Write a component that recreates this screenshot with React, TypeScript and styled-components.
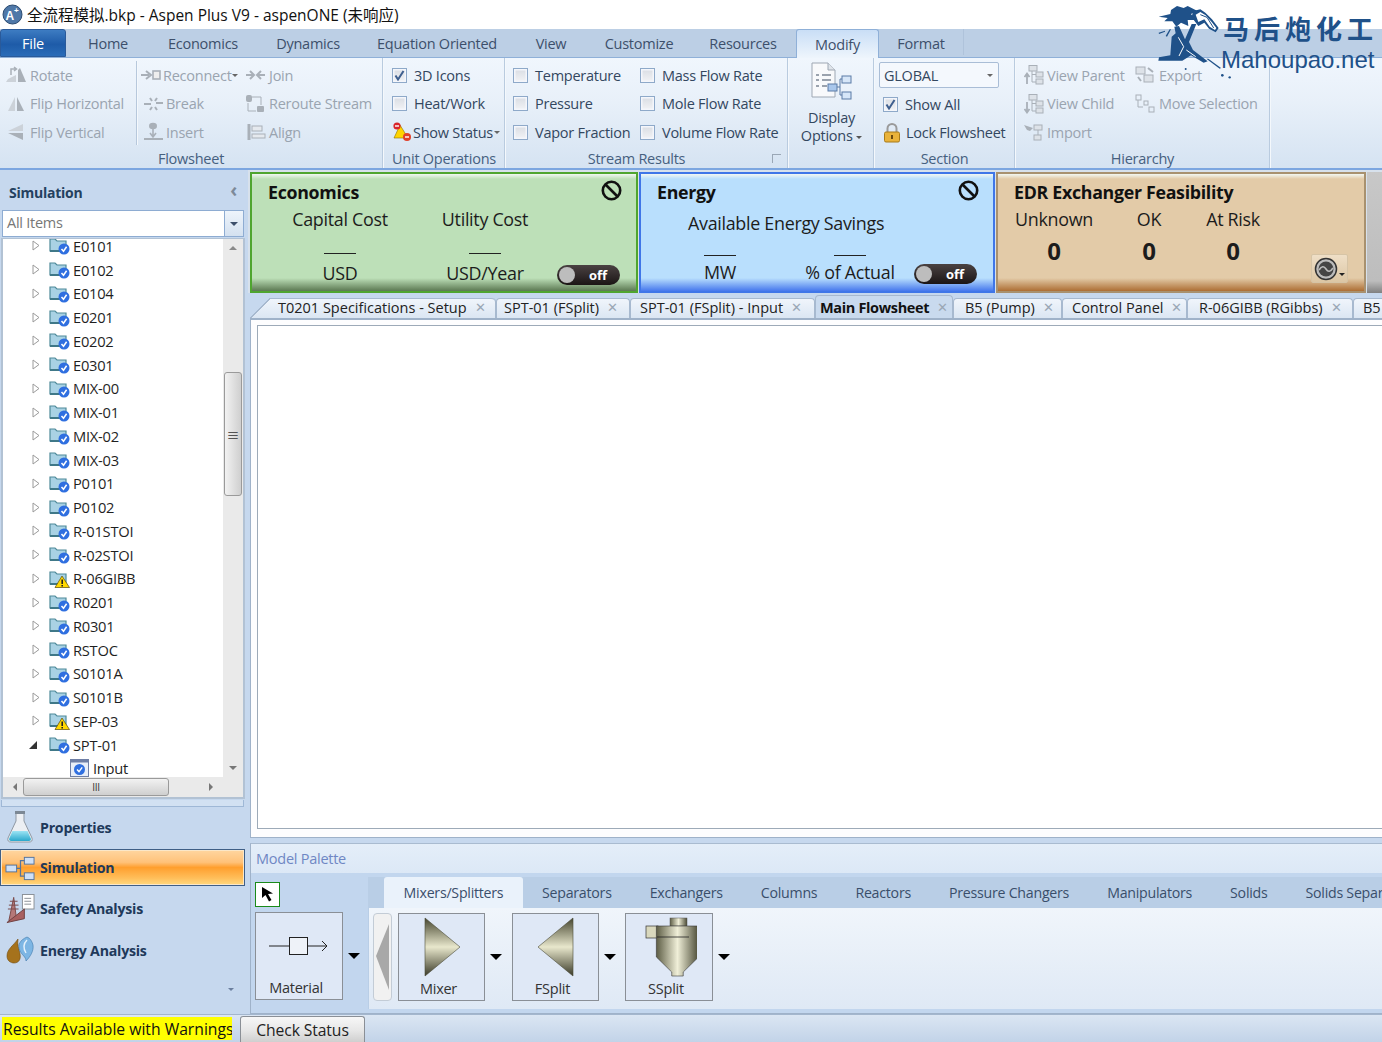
import React from "react";
import styled, { createGlobalStyle } from "styled-components";

const FONT = `"Open Sans", "Noto Sans CJK SC", sans-serif`;

const Global = createGlobalStyle`
  html, body { margin: 0; padding: 0; background: #fff; overflow: hidden; }
  * { box-sizing: border-box; }
`;

const Page = styled.div`
  width: 1382px; height: 1042px; overflow: hidden; position: relative;
  display: flex; flex-direction: column; background: #c6d8ee;
  font-family: ${FONT}; font-size: 14.5px; letter-spacing: -0.25px; color: #222;
`;
const TitleBar = styled.div`
  height: 29px; background: #fff; display: flex; align-items: center; gap: 4px; padding: 0 0 0 2px;
  font-size: 15.5px; color: #111; flex: none; letter-spacing: 0;
`;
const TabBar = styled.div`
  height: 29px; flex: none; display: flex; align-items: stretch;
  background: #bccfe5; border-bottom: 1px solid #8fb0d8;
`;
const FileTab = styled.div`
  width: 66px; background: linear-gradient(#3d7cc2, #1e5ba8 55%, #2a6cb8);
  color: #fff; border-radius: 3px 3px 0 0; display: flex; align-items: center; justify-content: center;
  border: 1px solid #2a5a9a;
`;
const RibbonTab = styled.div<{ $w: number; $active?: boolean }>`
  width: ${p => p.$w}px; display: flex; align-items: center; justify-content: center; color: #3d4f6b;
  ${p => p.$active ? `background: linear-gradient(#c9def6, #eef5fc); border: 1px solid #8fb0d8; border-bottom: none; border-radius: 3px 3px 0 0; margin-bottom: -1px; position: relative;` : ""}
`;
const TabDivider = styled.div`width: 1px; background: #afc3db; margin-bottom: 2px;`;
const Ribbon = styled.div`
  height: 112px; flex: none; display: flex; background: linear-gradient(#f0f6fd, #e8f0f9 40%, #d5e3f2);
  border-bottom: 2px solid #7ca6e0;
`;
const Group = styled.div<{ $w: number }>`
  width: ${p => p.$w}px; flex: none; display: flex; flex-direction: column; position: relative;
  border-right: 1px solid #b9cbdf; box-shadow: 1px 0 0 #f4f8fc; margin-right: 1px;
`;
const GroupBody = styled.div<{ $pad?: number }>`
  flex: 1; display: flex; padding: 3px 0 0 ${p => p.$pad ?? 0}px; min-height: 0;
`;
const GroupLabel = styled.div<{ $offset?: number }>`
  height: 21px; text-align: center; color: #46607f; line-height: 23px; flex: none; padding-right: ${p => p.$offset ?? 0}px;
`;
const Col = styled.div<{ $w: number; $rule?: boolean; $inset?: number }>`
  width: ${p => p.$w}px; flex: none; display: flex; flex-direction: column; padding-left: ${p => p.$inset ?? 0}px;
  ${p => p.$rule ? `border-right: 1px solid #b7c8dc; height: 84px; box-shadow: 1px 0 0 #f4f8fc;` : ""}
`;
const Item = styled.div<{ $off?: boolean; $gap?: number }>`
  height: 28.6px; display: flex; align-items: center; gap: ${p => p.$gap ?? 3}px; white-space: nowrap;
  color: ${p => p.$off ? "#9aa4b0" : "#33475f"}; flex: none;
`;
const Nudge = styled.span<{ $w: number }>`margin-left: ${p => p.$w}px; flex: none;`;
const Box = styled.span`
  width: 15px; height: 15px; flex: none; border: 1px solid #8ea9c9; background: linear-gradient(#d9dde3, #f2f3f6);
  box-shadow: inset 0 0 0 1.5px #f4f6fb; display: flex; align-items: center; justify-content: center;
`;
const DownCaret = styled.span`
  width: 0; height: 0; border-left: 3px solid transparent; border-right: 3px solid transparent;
  border-top: 3px solid #666; flex: none;
`;
const DisplayBtn = styled.div`
  width: 85px; display: flex; flex-direction: column; align-items: center; color: #33475f; line-height: 18px; text-align: center;
  padding-top: 4px;
`;
const DisplayText = styled.div`margin-top: 7px; display: flex; flex-direction: column; align-items: center;`;
const SmallCombo = styled.div`
  width: 120px; height: 26px; margin: 1px 0 2px -4px; border: 1px solid #a9bdd6; background: #f4f8fd; border-radius: 2px; display: flex; align-items: center;
  justify-content: space-between; padding: 0 5px 0 4px; color: #33475f; flex: none;
`;
const Launcher = styled.div`position: absolute; right: 6px; bottom: 5px; width: 9px; height: 9px; border: 1px solid #9aa7b6; border-width: 1px 0 0 1px;`;
const Logo = styled.div`
  position: absolute; left: 1157px; top: 5px; width: 225px; height: 76px; pointer-events: none; display: flex; z-index: 5;
`;
const LogoText = styled.div`display: flex; flex-direction: column; margin-left: -9px; color: #1f5189;`;
const LogoCn = styled.div`font-size: 26px; font-weight: 700; line-height: 36px; letter-spacing: 5px; margin-top: 5px; font-family: "Noto Sans CJK SC", sans-serif;`;
const LogoEn = styled.div`font-size: 24px; line-height: 28px; letter-spacing: 0; margin-left: -2px; font-family: "Liberation Sans", sans-serif; white-space: nowrap;`;

const Body = styled.div`flex: 1; display: flex; min-height: 0;`;
const Sidebar = styled.div`width: 248px; flex: none; display: flex; flex-direction: column; background: #c6d8ee; padding-right: 2px;`;
const SideHead = styled.div`
  height: 40px; flex: none; display: flex; align-items: center; justify-content: space-between; padding: 5px 9px 0 9px;
  font-weight: 700; color: #24415f; font-size: 14px;
`;
const Chevron = styled.span`color: #7d8a99; font-size: 19px; font-weight: 700; margin-top: -6px;`;
const Combo = styled.div`
  height: 27px; flex: none; margin: 0 2px; display: flex; border: 1px solid #8eacd2; background: #fff;
`;
const ComboText = styled.div`flex: 1; color: #777; padding-left: 4px; line-height: 24px;`;
const ComboBtn = styled.div`
  width: 19px; background: linear-gradient(#eef4fb, #d4e1f0); border-left: 1px solid #8eacd2; display: flex; align-items: center; justify-content: center;
`;
const Caret = styled.span<{ $c?: string; $s?: number }>`
  width: 0; height: 0; border-left: ${p => p.$s ?? 4}px solid transparent; border-right: ${p => p.$s ?? 4}px solid transparent;
  border-top: ${p => p.$s ?? 4}px solid ${p => p.$c ?? "#3d4f6b"}; flex: none;
`;
const TreeWrap = styled.div`
  height: 561px; flex: none; margin: 1px 1px 0; border: 2px solid #b2c2d4; border-top-width: 1px; background: #fff; display: grid;
  grid-template-columns: 1fr 20px; grid-template-rows: 1fr 20px; overflow: hidden;
`;
const TreeClip = styled.div`overflow: hidden;`;
const TreeList = styled.div`margin-top: -5px;`;
const Row = styled.div`
  height: 23.76px; display: flex; align-items: center; color: #1f1f1f; font-size: 14.7px; padding-left: 25px; white-space: nowrap;
`;
const SubRow = styled(Row)`padding-left: 67px; gap: 4px;`;
const Expander = styled.span`width: 21px; flex: none; display: flex;`;
const RowLabel = styled.span`margin-left: 3px;`;
const VScroll = styled.div`
  background: #eaeaea; display: flex; flex-direction: column; align-items: center; position: relative; justify-content: space-between;
`;
const Thumb = styled.div`
  position: absolute; left: 1px; top: 133px; width: 18px; height: 124px; border: 1px solid #9a9a9a; border-radius: 3px;
  background: linear-gradient(90deg, #f2f2f2, #cfcfcf); display: flex; align-items: center; justify-content: center;
  color: #333; font-size: 13px;
`;
const HScroll = styled.div`
  background: #eaeaea; position: relative; display: flex; align-items: center; justify-content: space-between; padding: 0 8px;
`;
const HThumb = styled.div`
  position: absolute; left: 20px; top: 1px; width: 146px; height: 18px; border: 1px solid #9a9a9a; border-radius: 3px;
  background: linear-gradient(#f2f2f2, #cfcfcf); display: flex; align-items: center; justify-content: center; color: #333; font-size: 10px;
`;
const Corner = styled.div`background: #eaeaea;`;
const Gripper = styled.div`height: 7px; flex: none; margin: 1px 2px 0 1px; background: #d2e1f2; border: 1px solid #9fb8d6; border-top: none;`;
const NavItem = styled.div<{ $active?: boolean; $h: number; $lift?: number }>`
  height: ${p => p.$h}px; flex: none; display: flex; align-items: center; font-weight: 700; color: #20395a; font-size: 14.2px; margin: 0 1px 0 0;
  padding: 0 0 ${p => p.$lift ?? 0}px 5px; gap: 5px;
  ${p => p.$active ? `background: linear-gradient(#ffd6a0, #ffc27a 35%, #ff9f2e 50%, #ffbe5a 80%, #ffd97f); border: 1px solid #3f5f86; box-shadow: inset 0 0 0 1px #fbe7c8; padding-left: 4px;` : ""}
`;
const NavIcon = styled.span`width: 30px; height: 34px; flex: none; display: flex; align-items: center; justify-content: center;`;
const NavMore = styled.div`flex: 1; display: flex; justify-content: flex-end; align-items: flex-start; padding: 19px 12px 0 0;`;

const Main = styled.div`flex: 1; min-width: 0; display: flex; flex-direction: column; background: #c6d8ee;`;
const Cards = styled.div`height: 123px; flex: none; display: flex; padding: 2px 0 0 2px; gap: 1px; background: #d7e1ec;`;
const Card = styled.div<{ $w: number; $bg: string; $bd: string; $end: string }>`
  width: ${p => p.$w}px; flex: none; height: 121px; border: 2px solid ${p => p.$bd}; padding: 5px 16px 0 16px;
  background: linear-gradient(#f2f7f2 0, ${p => p.$bg} 5px, ${p => p.$bg} 104px, ${p => p.$end} 118px); position: relative;
  display: flex; flex-direction: column; color: #1c1c1c;
`;
const CardHead = styled.div`display: flex; justify-content: space-between; align-items: center; height: 26px; flex: none;`;
const CardTitle = styled.div`font-weight: 700; font-size: 17.8px; letter-spacing: -0.3px; color: #111;`;
const CardGrid = styled.div<{ $cols: string }>`
  display: grid; grid-template-columns: ${p => p.$cols}; justify-items: center; align-items: center; align-content: start;
`;
const CardLabel = styled.div<{ $span?: number; $mt?: number; $indent?: number }>`
  font-size: 17.9px; letter-spacing: -0.3px; white-space: nowrap; height: 28px; line-height: 28px; margin-top: ${p => p.$mt ?? 0}px;
  ${p => p.$span ? `grid-column: span ${p.$span}; justify-self: start; margin-left: ${p.$indent ?? 0}px;` : ""}
`;
const Dash = styled.div<{ $mt: number; $first?: boolean }>`
  width: 32px; height: 1px; background: #222; margin-top: ${p => p.$mt}px;
  ${p => p.$first ? "grid-column: 1;" : ""}
`;
const Unit = styled.div<{ $mt?: number }>`font-size: 17.9px; letter-spacing: -0.3px; line-height: 24px; margin-top: ${p => p.$mt ?? 7}px; white-space: nowrap;`;
const Toggle = styled.div`
  width: 63px; height: 20px; background: linear-gradient(#4a4242, #1b1515); border-radius: 10px; display: flex; align-items: center; justify-content: space-between;
  padding: 0 13px 0 2px; color: #fff; font-weight: 700; font-size: 13px; letter-spacing: 0; align-self: end; justify-self: end;
`;
const Knob = styled.span`width: 16px; height: 16px; border-radius: 50%; background: #bdbdbd; flex: none;`;
const Count = styled.div`font-weight: 700; font-size: 24px; line-height: 36px;`;
const GearBtn = styled.div`
  position: absolute; right: 16px; bottom: 8px; width: 37px; height: 29px; background: linear-gradient(#efdfc7, #dcc6a4); border: 1px solid #d6c4a6; border-radius: 2px;
  display: flex; align-items: center; justify-content: center; gap: 1px;
`;
const CardRest = styled.div`flex: 1; background: linear-gradient(#c8c8c8, #bdbdbd 90%, #808080); height: 121px;`;

const DocTabs = styled.div`height: 23px; flex: none; display: flex; align-items: flex-end; background: #c6d8ee; padding-left: 2px; overflow: hidden; margin-top: 2px;`;
const DocTab = styled.div<{ $w: number; $active?: boolean; $pad: number; $slant?: number }>`
  width: ${p => p.$w}px; flex: none; height: ${p => p.$active ? 23 : 20}px; display: flex; align-items: center; gap: 8px; padding: ${p => p.$active ? "0" : "0 0 2px"};
  padding-left: ${p => p.$pad}px; white-space: nowrap; font-size: 14.5px; letter-spacing: 0; color: #222; position: relative; isolation: isolate;
  border: 1px solid #a7b9cf; border-bottom: none; border-radius: 4px 4px 0 0;
  background: ${p => p.$active ? "#c9daee" : "linear-gradient(#f0f5fb, #dbe6f3)"};
  ${p => p.$active ? "font-weight: 700; color: #111; letter-spacing: -0.35px;" : ""}
  ${p => p.$slant ? `
    border-left: none; border-top: none; border-radius: 0 4px 0 0; background: none;
    &::before {
      content: ""; position: absolute; inset: 0; z-index: -1; border-top: 1px solid #a7b9cf; border-radius: 0 4px 0 0;
      background: linear-gradient(#f0f5fb, #dbe6f3);
      clip-path: polygon(0 100%, ${p.$slant}px 0, 100% 0, 100% 100%);
    }
    &::after {
      content: ""; position: absolute; left: 0; bottom: 0; width: ${p.$slant}px; height: 100%; z-index: 0;
      background: linear-gradient(to top left, transparent calc(50% - 1px), #a7b9cf calc(50% - 1px), #a7b9cf 50%, transparent 50%);
    }
  ` : ""}
`;
const DocClose = styled.span`color: #9aa7b5; font-size: 13px; font-weight: 400; line-height: 1;`;
const CanvasOuter = styled.div`
  height: 520px; flex: none; margin-left: 2px; background: #fdfdfe; border: 1px solid #9fb2c9; border-right: none; padding: 5px 0 8px 6px;
  border-top: 2px solid #9fb2c9;
`;
const Canvas = styled.div`height: 100%; background: #fff; border: 1px solid #9daab8; border-right: none;`;
const PalHead = styled.div`
  height: 30px; flex: none; margin: 5px 0 0 2px; padding-left: 5px; line-height: 30px; color: #6f87c4; background: linear-gradient(#e4eef9, #dce8f6);
  border-left: 1px solid #9fb2c9; border-top: 1px solid #a9bbd0;
`;
const Palette = styled.div`
  flex: 1; margin-left: 2px; background: #c2d6ee; display: flex; padding: 0 0 4px 4px; border-left: 1px solid #9fb2c9; border-bottom: 1px solid #9fb2c9; min-height: 0;
`;
const PalLeft = styled.div`width: 113px; flex: none; display: flex; flex-direction: column; padding-top: 9px;`;
const Arrow = styled.div`
  width: 25px; height: 25px; background: #fff; border: 1px solid #1a8a1a; display: flex; align-items: center; justify-content: center;
`;
const MatRow = styled.div`display: flex; align-items: center; gap: 5px; margin-top: 5px;`;
const Model = styled.div<{ $w?: number }>`
  width: ${p => p.$w ?? 87}px; height: 88px; flex: none; background: #dfe8f6; border: 1px solid #8a8f96; display: flex; flex-direction: column; align-items: center;
  justify-content: space-between; color: #333; padding: 3px 0 1px; line-height: 20px; font-size: 14.5px;
`;
const ModelLabel = styled.span`margin-right: 6px;`;
const MaterialSlot = styled.span`height: 40px; display: flex; align-items: flex-end; margin-left: -2px;`;
const Black = styled.span`
  width: 0; height: 0; border-left: 6px solid transparent; border-right: 6px solid transparent; border-top: 6px solid #000; flex: none;
`;
const PalRight = styled.div`flex: 1; display: flex; flex-direction: column; padding-top: 4px; min-width: 0;`;
const PalTabs = styled.div`height: 31px; flex: none; display: flex; background: #b9cee6; padding-left: 16px; white-space: nowrap; overflow: hidden;`;
const PalTab = styled.div<{ $active?: boolean }>`
  flex: none; padding: 0 19px; display: flex; align-items: center; color: #3a4e6b; font-size: 14.2px;
  ${p => p.$active ? "background: #eaf2fb; border-radius: 3px 3px 0 0; width: 139px; justify-content: center; padding: 0;" : ""}
`;
const PalBody = styled.div`
  flex: 1; background: linear-gradient(#f0f5fb, #dfe9f5); display: flex; padding: 5px 0 0 4px; min-height: 0; border-left: 1px solid #b9cee6;
`;
const ScrollLeft = styled.div`
  width: 19px; height: 88px; flex: none; border: 1px solid #c3ccd6; border-radius: 4px; background: #f1f1f1; display: flex; align-items: center; justify-content: center; margin-right: 6px;
`;
const ModelGroup = styled.div<{ $w: number }>`width: ${p => p.$w}px; flex: none; display: flex; align-items: center; gap: 5px; height: 88px;`;
const Status = styled.div`
  height: 28px; flex: none; display: flex; align-items: flex-end; padding: 0 0 0 2px; background: linear-gradient(#dbe6f3, #c2d3e8); border-top: 1px solid #a3b6cd;
`;
const Warn = styled.div`
  width: 230px; height: 23px; background: #ffff00; margin-bottom: 2px; padding-left: 1px; line-height: 25px; color: #111; font-size: 15.7px; letter-spacing: 0; white-space: nowrap; overflow: hidden;
`;
const CheckBtn = styled.div`
  width: 125px; height: 26px; margin-left: 8px; background: linear-gradient(#f7f7f7, #e6e6e6 55%, #cfcfcf); border: 1px solid #8a8f96; border-bottom: none; border-radius: 3px 3px 0 0;
  display: flex; align-items: center; justify-content: center; color: #222; font-size: 15.7px; letter-spacing: -0.1px;
`;

const Check = () => (
  <svg width="11" height="11" viewBox="0 0 11 11"><path d="M1.5 5.5 L4 9.5 L9.5 1" fill="none" stroke="#3f5f8f" strokeWidth="2" /></svg>
);
const G = "#a9b0b8";
const L = "#ccd2d9";
const RIcon = ({ k }: { k: string }) => {
  const s = (c: React.ReactNode, w = 22) => <svg width={w} height="20" viewBox="0 0 22 20" style={{ flex: "none" }}>{c}</svg>;
  switch (k) {
    case "rotate": return s(<><path d="M0 17 L10 17 L10 10 L2 14Z" fill={L} /><path d="M12 17 L20 17 L14 3 L12 5Z" fill={G} /><path d="M5 10 L5 4 L10 4 M8 2 L10.5 4 L8 6" fill="none" stroke={G} strokeWidth="1.5" /></>);
    case "fliph": return s(<><path d="M2 17 L9 3 L9 17Z" fill={L} /><path d="M11 3 L18 17 L11 17Z" fill={G} /></>);
    case "flipv": return s(<><path d="M2 9 L17 2 L17 9Z" fill={L} /><path d="M2 11 L17 11 L17 18Z" fill={G} /></>);
    case "reconnect": return s(<><path d="M0 10 H8 M5 6 L10 10 L5 14" stroke={G} strokeWidth="2" fill="none" /><rect x="12" y="6" width="7" height="8" fill="#eee" stroke={G} strokeWidth="1.6" /></>);
    case "join": return s(<><path d="M1 10 H8 M5 6 L9 10 L5 14 M20 10 H13 M16 6 L12 10 L16 14" stroke={G} strokeWidth="2" fill="none" /></>);
    case "break": return s(<><path d="M1 10 H8 M13 9 H20 M7 4 L9 7 M14 4 L12 7 M7 16 L9 13 M14 16 L12 13" stroke={G} strokeWidth="2" fill="none" /></>);
    case "reroute": return s(<><rect x="1" y="1" width="6" height="7" rx="2" fill={G} /><rect x="12" y="12" width="7" height="6" rx="1" fill={G} /><path d="M7 3 H16 V11 M3 9 V17 H11" fill="none" stroke={G} /></>);
    case "insert": return s(<><ellipse cx="10" cy="4" rx="4" ry="3.2" fill={G} /><path d="M10 7 V14 M7 11 L10 15 L13 11" fill="none" stroke={G} strokeWidth="1.6" /><path d="M1 17 H20" stroke={G} strokeWidth="2" /></>);
    case "align": return s(<><path d="M4 2 V18" stroke={G} strokeWidth="3" /><rect x="7" y="4" width="10" height="5" fill="#e5e9ee" stroke={G} /><rect x="7" y="12" width="13" height="4" fill="#e5e9ee" stroke={G} /></>);
    case "hierUp": return s(<><rect x="5" y="0.5" width="8" height="5.5" fill="#dde2e8" stroke={G} /><rect x="12" y="7" width="7" height="5" fill="#dde2e8" stroke={G} /><rect x="12" y="14" width="7" height="5" fill="#dde2e8" stroke={G} /><path d="M8 6 V17 H12 M8 9.5 H12" stroke={G} fill="none" /><path d="M3 19 V10 M0.5 12 L3 8.5 L5.5 12" stroke={G} strokeWidth="1.8" fill="none" /></>);
    case "hierDown": return s(<><rect x="5" y="0.5" width="8" height="5.5" fill="#dde2e8" stroke={G} /><rect x="12" y="7" width="7" height="5" fill="#dde2e8" stroke={G} /><rect x="12" y="14" width="7" height="5" fill="#dde2e8" stroke={G} /><path d="M8 6 V17 H12 M8 9.5 H12" stroke={G} fill="none" /><path d="M3 8 V17 M0.5 15 L3 18.5 L5.5 15" stroke={G} strokeWidth="1.8" fill="none" /></>);
    case "export": return s(<><rect x="1" y="2" width="9" height="7" fill="#dde2e8" stroke={G} /><rect x="9" y="10" width="9" height="7" fill="#dde2e8" stroke={G} /><path d="M13 3 L18 7 M3 12 L6 16" stroke={G} strokeWidth="2" /></>);
    case "move": return s(<><rect x="1" y="1" width="5" height="5" fill="none" stroke={G} /><rect x="14" y="13" width="5" height="5" fill="none" stroke={G} /><rect x="9" y="7" width="4" height="4" fill="none" stroke={G} /><path d="M3 6 V13 H8" stroke={G} fill="none" /></>);
    case "import": return s(<><path d="M0 3 L9 6 L6 9 L3 8Z" fill={G} /><rect x="10" y="3" width="8" height="5" fill="#dde2e8" stroke={G} /><rect x="10" y="13" width="7" height="5" fill="#dde2e8" stroke={G} /><path d="M14 8 V13" stroke={G} /></>);
    default: return null;
  }
};
const StatusIcon = () => (
  <svg width="20" height="20" viewBox="0 0 20 20" style={{ flex: "none" }}>
    <path d="M7 2 L15 15 H1Z" fill="#ffd400" stroke="#8a7000" strokeWidth=".6" transform="translate(1 1)" />
    <circle cx="5" cy="4" r="3.6" fill="#d8252a" /><path d="M3 4 H7" stroke="#fff" strokeWidth="1.4" />
    <circle cx="15" cy="15" r="4" fill="#e0402a" /><path d="M13 15 H17" stroke="#fff" strokeWidth="1.4" />
  </svg>
);
const Lock = () => (
  <svg width="18" height="20" viewBox="0 0 18 20" style={{ flex: "none" }}>
    <path d="M4.5 9 V5.5 a4.5 4.5 0 0 1 9 0 V9" fill="none" stroke="#9a9a9a" strokeWidth="2" />
    <rect x="1.5" y="9" width="15" height="10" rx="1.5" fill="#e9b23a" stroke="#a87a18" />
    <rect x="8" y="12" width="2" height="4" fill="#6a4a10" />
  </svg>
);
const DocIcon = () => (
  <svg width="42" height="40" viewBox="0 0 42 40">
    <path d="M1 1 H17 L24 8 V35 H1Z" fill="#f8f9fb" stroke="#9ea7b3" />
    <path d="M17 1 V8 H24" fill="#dfe4ea" stroke="#9ea7b3" />
    <path d="M5 13 H8 M11 13 H20 M5 18 H8 M11 18 H20 M5 24 H8 M11 24 H16" stroke="#7b8594" strokeWidth="1.4" />
    <rect x="17" y="22" width="9" height="7" fill="#a9c7ec" stroke="#5a7ba6" />
    <rect x="31" y="14" width="9" height="7" fill="#d6e6f8" stroke="#5a7ba6" />
    <rect x="31" y="30" width="9" height="7" fill="#d6e6f8" stroke="#5a7ba6" />
    <path d="M26 25 H29 V17 H31 M29 25 V33 H31" stroke="#5a7ba6" fill="none" />
  </svg>
);

const Horse = () => (
  <svg width="75" height="75" viewBox="20 15 225 225" style={{ flex: "none" }}>
    <g fill="#1f5189">
      <path d="M25 50 L60 42 L62 30 L80 18 L100 24 L112 18 L140 32 L122 42 L136 60 L112 60 L114 78 L92 68 L78 80 L66 64 L42 64 L52 54Z" />
      <path d="M128 33 L150 28 L165 38 L185 58 L205 84 L196 97 L176 86 L162 68 L144 78 L124 52Z" />
      <path d="M72 80 L86 78 L104 118 L124 72 L138 72 L116 126 L128 150 L172 184 L160 188 L122 166 L96 182 L24 182 L26 172 L60 166 L64 110 L76 100Z" />
      <path d="M58 88 L62 88 L50 110 L46 108Z M25 98 L44 92 L44 95 L26 102Z" />
      <path d="M168 176 L174 176 L212 204 L208 206Z" />
      <circle cx="216" cy="226" r="4" /><circle cx="238" cy="232" r="3.5" /><circle cx="106" cy="207" r="3" />
    </g>
    <path d="M136 44 L150 36 L166 46 L184 66 L198 84 L194 90 L178 80 L162 58 L144 66Z" fill="#fff" />
    <path d="M150 44 L170 52 L190 84" stroke="#1f5189" strokeWidth="3" fill="none" />
    <path d="M84 112 L100 140 L86 168 M108 150 L136 170" stroke="#fff" strokeWidth="3" fill="none" />
  </svg>
);

const FolderIcon = ({ warn }: { warn?: boolean }) => (
  <svg width="21" height="19" viewBox="0 0 21 19" style={{ flex: "none" }}>
    <path d="M1 3 H6 L8 5 H17 V15 H1Z" fill="#a9d2e4" stroke="#4f8a99" strokeWidth="1.2" />
    <path d="M1 15 H17" stroke="#3f7888" strokeWidth="2" />
    {warn ? (
      <><path d="M13 7 L20.5 18.5 H6Z" fill="#ffd800" stroke="#57490a" strokeWidth=".7" /><path d="M13.2 10.5 V15 M13.2 16 V17.5" stroke="#222" strokeWidth="1.6" /></>
    ) : (
      <><circle cx="15" cy="13" r="5.5" fill="#2f6fe0" /><path d="M12.5 13 L14.5 15.2 L17.6 10.8" stroke="#fff" strokeWidth="1.5" fill="none" /></>
    )}
  </svg>
);
const Expand = ({ open }: { open?: boolean }) => open ? (
  <svg width="12" height="12" viewBox="0 0 12 12"><path d="M9 2 V10 H1Z" fill="#333" /></svg>
) : (
  <svg width="12" height="13" viewBox="0 0 12 13"><path d="M5 2 L11 6.5 L5 11Z" fill="#fff" stroke="#9a9a9a" /></svg>
);
const InputIcon = () => (
  <svg width="19" height="18" viewBox="0 0 19 18" style={{ flex: "none" }}>
    <rect x=".5" y=".5" width="18" height="17" fill="#e8eef8" stroke="#6f7fa5" />
    <rect x=".5" y=".5" width="18" height="3" fill="#6f7fa5" />
    <circle cx="9.5" cy="10.5" r="5.5" fill="#2f6fe0" />
    <path d="M7 10.5 L9 12.6 L12.2 8.4" stroke="#fff" strokeWidth="1.4" fill="none" />
  </svg>
);
const NoSign = () => (
  <svg width="21" height="21" viewBox="0 0 21 21" style={{ flex: "none", marginTop: -3, marginRight: -2 }}>
    <circle cx="10.5" cy="10.5" r="8.7" fill="none" stroke="#111" strokeWidth="2.6" />
    <path d="M4.5 4.5 L16.5 16.5" stroke="#111" strokeWidth="2.6" />
  </svg>
);
const Flask = () => (
  <svg width="26" height="32" viewBox="0 0 26 32">
    <defs><linearGradient id="flq" x1="0" x2="0" y1="0" y2="1"><stop offset="0" stopColor="#9be4f4" /><stop offset="1" stopColor="#2aa8cc" /></linearGradient></defs>
    <path d="M9 1 H17 V10 L25 27 Q26 31 22 31 H4 Q0 31 1 27 L9 10Z" fill="#eceff3" stroke="#8f98a3" />
    <path d="M5.5 20 H20.5 L24 28 Q24 30 22 30 H4 Q2 30 2 28Z" fill="url(#flq)" />
    <rect x="8" y="0" width="10" height="3" fill="#7c8894" />
  </svg>
);
const SimIcon = () => (
  <svg width="31" height="28" viewBox="0 0 31 28">
    <rect x="1" y="11" width="11" height="7" fill="#cfe0f7" stroke="#56749d" />
    <rect x="20" y="3" width="10" height="7" fill="#cfe0f7" stroke="#56749d" />
    <rect x="20" y="19" width="10" height="7" fill="#cfe0f7" stroke="#56749d" />
    <path d="M12 14.5 H16 V6.5 H20 M16 14.5 V22.5 H20" stroke="#56749d" fill="none" strokeWidth="1.3" />
  </svg>
);
const SafetyIcon = () => (
  <svg width="31" height="32" viewBox="0 0 31 32">
    <rect x="18" y="1" width="12" height="15" fill="#fff" stroke="#8a8f96" />
    <path d="M20 5 H27 M20 8 H27 M20 11 H27" stroke="#8a8f96" />
    <path d="M4 28 L9 4 L12 27Z" fill="#b57878" stroke="#7a4a4a" />
    <path d="M5 8 H13 M4 12 H14 M3 16 H14" stroke="#7a4a4a" />
    <path d="M2 30 L20 16 V26 Z" fill="#a86060" stroke="#704040" />
  </svg>
);
const EnergyIcon = () => (
  <svg width="30" height="28" viewBox="0 0 30 28">
    <path d="M13 3 C8 10 2 13 2 20 C2 25 6 27 9 27 C14 27 16 23 15 18 C14 13 12 8 13 3Z" fill="#a5721c" stroke="#704c10" strokeWidth=".6" />
    <path d="M22 1 C15 4 12 9 15 15 C17 19 21 21 21 25 C25 21 29 15 28 9 C27 5 25 2 22 1Z" fill="#7db6e4" stroke="#3f78aa" strokeWidth=".6" />
    <path d="M22 4 C18 8 18 12 21 17" stroke="#e4f1fb" strokeWidth="1.4" fill="none" />
  </svg>
);
const GearIcon = () => (
  <svg width="24" height="24" viewBox="0 0 24 24">
    <circle cx="12" cy="12" r="10.5" fill="#bbb" stroke="#333" strokeWidth="1.5" />
    <circle cx="12" cy="12" r="7.5" fill="#444" />
    <path d="M5 13 Q9 7 12 12 T19 11" stroke="#bbb" strokeWidth="1.6" fill="none" />
  </svg>
);
const Mixer = ({ flip, id }: { flip?: boolean; id: string }) => (
  <svg width="40" height="60" viewBox="0 0 40 60" style={flip ? { transform: "scaleX(-1)" } : undefined}>
    <defs><linearGradient id={id} x1="0" x2="0" y1="0" y2="1"><stop offset="0" stopColor="#45452f" /><stop offset=".5" stopColor="#e8e7cc" /><stop offset="1" stopColor="#3a3a28" /></linearGradient></defs>
    <path d="M3 1 L38 30 L3 59Z" fill={`url(#${id})`} stroke="#4a4a38" strokeWidth=".6" />
  </svg>
);
const SSplitIcon = () => (
  <svg width="56" height="60" viewBox="0 0 56 60">
    <defs><linearGradient id="ssg" x1="0" x2="1" y1="0" y2="0"><stop offset="0" stopColor="#5d5d45" /><stop offset=".5" stopColor="#f0efd8" /><stop offset="1" stopColor="#4a4a35" /></linearGradient></defs>
    <rect x="29" y="1" width="17" height="8" fill="url(#ssg)" stroke="#555" strokeWidth=".5" />
    <rect x="5" y="9" width="12" height="12" fill="#d9d8bd" stroke="#333" strokeWidth=".7" />
    <path d="M16 9 H60 V40 L44 55 V59 H32 V55 L16 40Z" fill="url(#ssg)" stroke="#333" strokeWidth=".6" transform="scale(.96 1)" />
    <path d="M16 20 H48" stroke="#222" strokeWidth=".8" />
  </svg>
);
const MaterialIcon = () => (
  <svg width="60" height="20" viewBox="0 0 60 20">
    <path d="M1 10 H22 M40 10 H59 M54 5 L59 10 L54 15" stroke="#222" fill="none" />
    <rect x="21.5" y="1.5" width="18" height="17" fill="#eef2f8" stroke="#222" />
  </svg>
);
const Cursor = () => (
  <svg width="14" height="17" viewBox="0 0 14 17"><path d="M1 1 L1 12 L4.5 9 L8 15.5 L10.5 14 L7 8 L12 7.5Z" fill="#000" /></svg>
);

const treeItems: [string, boolean?][] = [
  ["E0101"], ["E0102"], ["E0104"], ["E0201"], ["E0202"], ["E0301"], ["MIX-00"], ["MIX-01"], ["MIX-02"], ["MIX-03"],
  ["P0101"], ["P0102"], ["R-01STOI"], ["R-02STOI"], ["R-06GIBB", true], ["R0201"], ["R0301"], ["RSTOC"], ["S0101A"], ["S0101B"], ["SEP-03", true],
];

const docTabs: { n: string; w: number; pad: number; slant?: number; active?: boolean }[] = [
  { n: "T0201 Specifications - Setup", w: 246, pad: 28, slant: 20 },
  { n: "SPT-01 (FSplit)", w: 134, pad: 7 },
  { n: "SPT-01 (FSplit) - Input", w: 185, pad: 9 },
  { n: "Main Flowsheet", w: 138, pad: 4, active: true },
  { n: "B5 (Pump)", w: 109, pad: 11 },
  { n: "Control Panel", w: 125, pad: 9 },
  { n: "R-06GIBB (RGibbs)", w: 166, pad: 11 },
  { n: "B5", w: 60, pad: 9 },
];

const palTabs = ["Separators", "Exchangers", "Columns", "Reactors", "Pressure Changers", "Manipulators", "Solids", "Solids Separators"];

export default function App() {
  return (
    <Page>
      <Global />
      <TitleBar>
        <svg width="21" height="21" viewBox="0 0 21 21" style={{ flex: "none" }}>
          <circle cx="10.5" cy="10.5" r="9.5" fill="#4f78a8" stroke="#2a4a70" />
          <text x="3.5" y="15.5" fontSize="12" fontWeight="700" fill="#fff" fontFamily="Liberation Sans">A</text>
          <text x="12" y="9" fontSize="8" fontWeight="700" fill="#fff" fontFamily="Liberation Sans">+</text>
        </svg>
        全流程模拟.bkp - Aspen Plus V9 - aspenONE (未响应)
      </TitleBar>
      <TabBar>
        <FileTab>File</FileTab>
        <RibbonTab $w={84}>Home</RibbonTab>
        <RibbonTab $w={106}>Economics</RibbonTab>
        <RibbonTab $w={104}>Dynamics</RibbonTab>
        <RibbonTab $w={154}>Equation Oriented</RibbonTab>
        <RibbonTab $w={74}>View</RibbonTab>
        <RibbonTab $w={102}>Customize</RibbonTab>
        <RibbonTab $w={106}>Resources</RibbonTab>
        <RibbonTab $w={83} $active>Modify</RibbonTab>
        <RibbonTab $w={84}>Format</RibbonTab>
        <TabDivider />
      </TabBar>
      <Logo>
        <Horse />
        <LogoText>
          <LogoCn>马后炮化工</LogoCn>
          <LogoEn>Mahoupao.net</LogoEn>
        </LogoText>
      </Logo>
      <Ribbon>
        <Group $w={383}>
          <GroupBody $pad={6}>
            <Col $w={131} $rule>
              <Item $off $gap={2}><RIcon k="rotate" />Rotate</Item>
              <Item $off $gap={2}><RIcon k="fliph" />Flip Horizontal</Item>
              <Item $off $gap={2}><RIcon k="flipv" />Flip Vertical</Item>
            </Col>
            <Col $w={108}>
              <Item $off $gap={0}><Nudge $w={4} /><RIcon k="reconnect" />Reconnect<DownCaret /></Item>
              <Item $off $gap={0}><Nudge $w={6} /><RIcon k="break" /><Nudge $w={1}>Break</Nudge></Item>
              <Item $off $gap={0}><Nudge $w={6} /><RIcon k="insert" /><Nudge $w={1}>Insert</Nudge></Item>
            </Col>
            <Col $w={130}>
              <Item $off $gap={2}><RIcon k="join" />Join</Item>
              <Item $off $gap={2}><RIcon k="reroute" />Reroute Stream</Item>
              <Item $off $gap={2}><RIcon k="align" />Align</Item>
            </Col>
          </GroupBody>
          <GroupLabel>Flowsheet</GroupLabel>
        </Group>
        <Group $w={121}>
          <GroupBody $pad={8}>
            <Col $w={112}>
              <Item $gap={7}><Box><Check /></Box>3D Icons</Item>
              <Item $gap={7}><Box />Heat/Work</Item>
              <Item $gap={1}><StatusIcon />Show Status<DownCaret /></Item>
            </Col>
          </GroupBody>
          <GroupLabel>Unit Operations</GroupLabel>
        </Group>
        <Group $w={282}>
          <GroupBody $pad={7}>
            <Col $w={127}>
              <Item $gap={7}><Box />Temperature</Item>
              <Item $gap={7}><Box />Pressure</Item>
              <Item $gap={7}><Box />Vapor Fraction</Item>
            </Col>
            <Col $w={145}>
              <Item $gap={7}><Box />Mass Flow Rate</Item>
              <Item $gap={7}><Box />Mole Flow Rate</Item>
              <Item $gap={7}><Box />Volume Flow Rate</Item>
            </Col>
          </GroupBody>
          <GroupLabel $offset={20}>Stream Results</GroupLabel>
          <Launcher />
        </Group>
        <Group $w={85}>
          <DisplayBtn>
            <DocIcon />
            <DisplayText>
              <span>Display</span>
              <span>Options <Caret $s={3} $c="#555" style={{ display: "inline-block", verticalAlign: "middle" }} /></span>
            </DisplayText>
          </DisplayBtn>
        </Group>
        <Group $w={140}>
          <GroupBody $pad={4}>
            <Col $w={135} $inset={4}>
              <SmallCombo>GLOBAL<DownCaret /></SmallCombo>
              <Item $gap={7}><Box><Check /></Box>Show All</Item>
              <Item $gap={5}><Lock />Lock Flowsheet</Item>
            </Col>
          </GroupBody>
          <GroupLabel>Section</GroupLabel>
        </Group>
        <Group $w={254}>
          <GroupBody $pad={8}>
            <Col $w={111}>
              <Item $off $gap={1}><RIcon k="hierUp" />View Parent</Item>
              <Item $off $gap={1}><RIcon k="hierDown" />View Child</Item>
              <Item $off $gap={1}><RIcon k="import" />Import</Item>
            </Col>
            <Col $w={130}>
              <Item $off $gap={2}><RIcon k="export" />Export</Item>
              <Item $off $gap={2}><RIcon k="move" />Move Selection</Item>
            </Col>
          </GroupBody>
          <GroupLabel>Hierarchy</GroupLabel>
        </Group>
      </Ribbon>
      <Body>
        <Sidebar>
          <SideHead>Simulation<Chevron>‹</Chevron></SideHead>
          <Combo>
            <ComboText>All Items</ComboText>
            <ComboBtn><Caret $s={4} /></ComboBtn>
          </Combo>
          <TreeWrap>
            <TreeClip>
              <TreeList>
                {treeItems.map(([n, w]) => (
                  <Row key={n}>
                    <Expander><Expand /></Expander>
                    <FolderIcon warn={w} />
                    <RowLabel>{n}</RowLabel>
                  </Row>
                ))}
                <Row>
                  <Expander><Expand open /></Expander>
                  <FolderIcon />
                  <RowLabel>SPT-01</RowLabel>
                </Row>
                <SubRow><InputIcon />Input</SubRow>
              </TreeList>
            </TreeClip>
            <VScroll>
              <Caret $s={4} $c="#8a8a8a" style={{ transform: "rotate(180deg)", marginTop: 7 }} />
              <Thumb>≡</Thumb>
              <Caret $s={4} $c="#777" style={{ marginBottom: 7 }} />
            </VScroll>
            <HScroll>
              <Caret $s={4} $c="#777" style={{ transform: "rotate(90deg)" }} />
              <HThumb>III</HThumb>
              <Caret $s={4} $c="#777" style={{ transform: "rotate(-90deg)" }} />
            </HScroll>
            <Corner />
          </TreeWrap>
          <Gripper />
          <NavItem $h={42} $lift={2}><NavIcon><Flask /></NavIcon>Properties</NavItem>
          <NavItem $h={37} $active><NavIcon><SimIcon /></NavIcon>Simulation</NavItem>
          <NavItem $h={45}><NavIcon><SafetyIcon /></NavIcon>Safety Analysis</NavItem>
          <NavItem $h={38}><NavIcon><EnergyIcon /></NavIcon>Energy Analysis</NavItem>
          <NavMore><Caret $s={3} $c="#6b7f9e" /></NavMore>
        </Sidebar>
        <Main>
          <Cards>
            <Card $w={388} $bg="#bde0b8" $bd="#4fa52f" $end="#54714a">
              <CardHead><CardTitle>Economics</CardTitle><NoSign /></CardHead>
              <CardGrid $cols="144px 146px minmax(0, 1fr)">
                <CardLabel>Capital Cost</CardLabel>
                <CardLabel>Utility Cost</CardLabel>
                <span />
                <Dash $mt={20} />
                <Dash $mt={20} />
                <span />
                <Unit>USD</Unit>
                <Unit>USD/Year</Unit>
                <Toggle><Knob />off</Toggle>
              </CardGrid>
            </Card>
            <Card $w={356} $bg="#b9dffd" $bd="#3f76e8" $end="#3d70ec">
              <CardHead><CardTitle>Energy</CardTitle><NoSign /></CardHead>
              <CardGrid $cols="126px 134px minmax(0, 1fr)">
                <CardLabel $span={3} $mt={4} $indent={31}>Available Energy Savings</CardLabel>
                <Dash $mt={18} $first />
                <Dash $mt={18} />
                <span />
                <Unit $mt={4}>MW</Unit>
                <Unit $mt={4}>% of Actual</Unit>
                <Toggle><Knob />off</Toggle>
              </CardGrid>
            </Card>
            <Card $w={370} $bg="#e3cba8" $bd="#a8916f" $end="#a9672b">
              <CardHead><CardTitle>EDR Exchanger Feasibility</CardTitle></CardHead>
              <CardGrid $cols="80px 110px 58px 1fr">
                <CardLabel>Unknown</CardLabel>
                <CardLabel>OK</CardLabel>
                <CardLabel>At Risk</CardLabel>
                <span />
                <Count>0</Count>
                <Count>0</Count>
                <Count>0</Count>
              </CardGrid>
              <GearBtn><GearIcon /><Caret $s={3} $c="#222" style={{ alignSelf: "flex-end", marginBottom: 6 }} /></GearBtn>
            </Card>
            <CardRest />
          </Cards>
          <DocTabs>
            {docTabs.map(t => (
              <DocTab key={t.n} $w={t.w} $pad={t.pad} $slant={t.slant} $active={t.active}>
                {t.n}{t.n !== "B5" && <DocClose>✕</DocClose>}
              </DocTab>
            ))}
          </DocTabs>
          <CanvasOuter><Canvas /></CanvasOuter>
          <PalHead>Model Palette</PalHead>
          <Palette>
            <PalLeft>
              <Arrow><Cursor /></Arrow>
              <MatRow>
                <Model $w={88}><MaterialSlot><MaterialIcon /></MaterialSlot><ModelLabel>Material</ModelLabel></Model>
                <Black />
              </MatRow>
            </PalLeft>
            <PalRight>
              <PalTabs>
                <PalTab $active>Mixers/Splitters</PalTab>
                {palTabs.map(t => <PalTab key={t}>{t}</PalTab>)}
              </PalTabs>
              <PalBody>
                <ScrollLeft>
                  <svg width="15" height="66" viewBox="0 0 15 66"><path d="M14 0 V66 L1 32Z" fill="#a8a8a8" /></svg>
                </ScrollLeft>
                <ModelGroup $w={114}><Model><Mixer id="mx1" /><ModelLabel>Mixer</ModelLabel></Model><Black /></ModelGroup>
                <ModelGroup $w={113}><Model><Mixer id="mx2" flip /><ModelLabel>FSplit</ModelLabel></Model><Black /></ModelGroup>
                <ModelGroup $w={114}><Model $w={88}><SSplitIcon /><ModelLabel>SSplit</ModelLabel></Model><Black /></ModelGroup>
              </PalBody>
            </PalRight>
          </Palette>
        </Main>
      </Body>
      <Status>
        <Warn>Results Available with Warnings</Warn>
        <CheckBtn>Check Status</CheckBtn>
      </Status>
    </Page>
  );
}
